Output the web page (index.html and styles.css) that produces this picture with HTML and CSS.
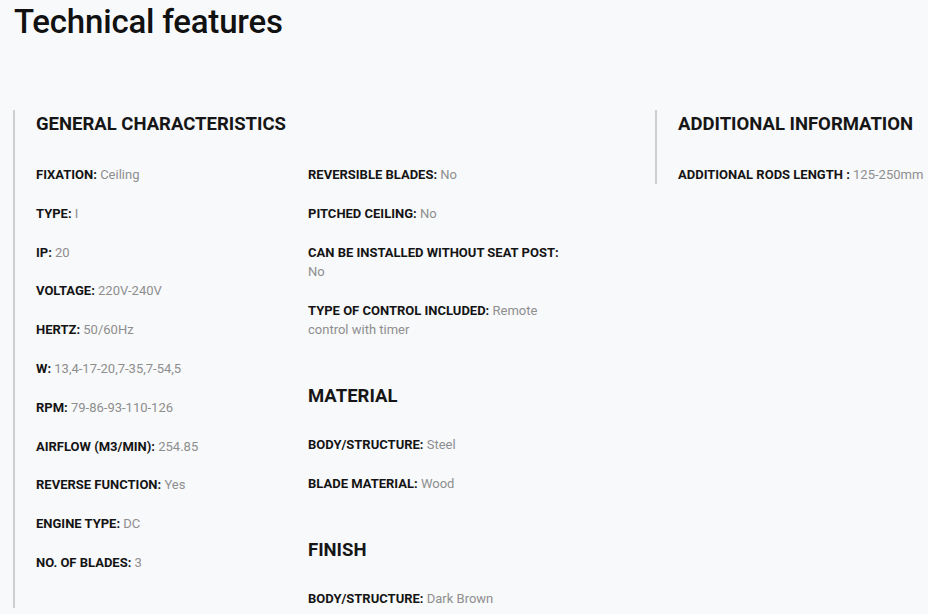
FILE: index.html
```html
<!DOCTYPE html>
<html lang="en">
<head>
<meta charset="utf-8">
<title>Technical features</title>
<link rel="stylesheet" href="styles.css">
</head>
<body>
<h1 class="title">Technical features</h1>
<div class="features">
  <section class="block block-main">
    <h2 class="block-heading">GENERAL CHARACTERISTICS</h2>
    <div class="cols">
      <ul class="list col-a">
        <li><b>FIXATION:</b> Ceiling</li>
        <li><b>TYPE:</b> I</li>
        <li><b>IP:</b> 20</li>
        <li><b>VOLTAGE:</b> 220V-240V</li>
        <li><b>HERTZ:</b> 50/60Hz</li>
        <li><b>W:</b> 13,4-17-20,7-35,7-54,5</li>
        <li><b>RPM:</b> 79-86-93-110-126</li>
        <li><b>AIRFLOW (M3/MIN):</b> 254.85</li>
        <li><b>REVERSE FUNCTION:</b> Yes</li>
        <li><b>ENGINE TYPE:</b> DC</li>
        <li><b>NO. OF BLADES:</b> 3</li>
      </ul>
      <div class="col-b">
        <ul class="list">
          <li><b>REVERSIBLE BLADES:</b> No</li>
          <li><b>PITCHED CEILING:</b> No</li>
          <li><b>CAN BE INSTALLED WITHOUT SEAT POST:</b> No</li>
          <li><b>TYPE OF CONTROL INCLUDED:</b> Remote control with timer</li>
        </ul>
        <h2 class="block-heading sub">MATERIAL</h2>
        <ul class="list">
          <li><b>BODY/STRUCTURE:</b> Steel</li>
          <li><b>BLADE MATERIAL:</b> Wood</li>
        </ul>
        <h2 class="block-heading sub">FINISH</h2>
        <ul class="list">
          <li><b>BODY/STRUCTURE:</b> Dark Brown</li>
        </ul>
      </div>
    </div>
  </section>
  <section class="block block-side">
    <h2 class="block-heading">ADDITIONAL INFORMATION</h2>
    <ul class="list">
      <li><b>ADDITIONAL RODS LENGTH :</b> 125-250mm</li>
    </ul>
  </section>
</div>
</body>
</html>
```
FILE: styles.css
```css
html, body {
  margin: 0;
  padding: 0;
  background: #f8f9fb;
}
body {
  font-family: Roboto, "Liberation Sans", sans-serif;
  color: #1a1a1a;
  overflow: hidden;
}
.title {
  margin: 0;
  padding: 3px 0 0 14px;
  font-size: 33px;
  line-height: 38px;
  font-weight: 500;
  color: #111;
  letter-spacing: -0.2px;
}
.features {
  display: flex;
  align-items: flex-start;
  margin-top: 69px;
  padding-left: 13px;
}
.block {
  border-left: 2px solid #cfcfd2;
  padding-left: 21px;
}
.block-main {
  width: 619px;
}
.block-side {
  white-space: nowrap;
}
.block-heading {
  margin: 0 0 27px;
  font-size: 18.5px;
  line-height: 28px;
  font-weight: 700;
  color: #161616;
}
.block-heading.sub {
  margin: 43px 0 25px;
}
.cols {
  display: flex;
}
.col-a {
  width: 272px;
}
.col-b {
  width: 262px;
}
.list {
  margin: 0;
  padding: 0;
  list-style: none;
  display: flex;
  flex-direction: column;
  gap: 19.6px;
}
.list li {
  font-size: 13px;
  line-height: 19.2px;
  color: #8e8e8e;
}
.list b {
  font-weight: 700;
  color: #141414;
}
```
